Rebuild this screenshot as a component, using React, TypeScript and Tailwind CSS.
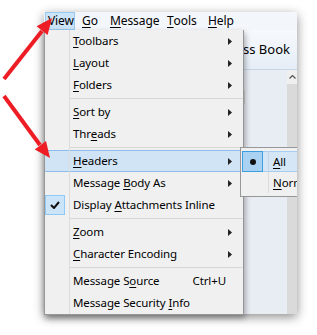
import { ReactNode } from 'react'

type Item = {
  label: ReactNode
  sub?: boolean
  shortcut?: string
  checked?: boolean
  active?: boolean
}

const u = (s: string) => <span className="underline underline-offset-[2px]">{s}</span>

const groups: Item[][] = [
  [
    { label: <>{u('T')}oolbars</>, sub: true },
    { label: <>{u('L')}ayout</>, sub: true },
    { label: <>{u('F')}olders</>, sub: true },
  ],
  [
    { label: <>{u('S')}ort by</>, sub: true },
    { label: <>Thr{u('e')}ads</>, sub: true },
  ],
  [
    { label: <>{u('H')}eaders</>, sub: true, active: true },
    { label: <>Message {u('B')}ody As</>, sub: true },
    { label: <>Display {u('A')}ttachments Inline</>, checked: true },
  ],
  [
    { label: <>{u('Z')}oom</>, sub: true },
    { label: <>{u('C')}haracter Encoding</>, sub: true },
  ],
  [
    { label: <>Message S{u('o')}urce</>, shortcut: 'Ctrl+U' },
    { label: <>Message Security {u('I')}nfo</> },
  ],
]

const menubar = [
  { label: <>View</>, w: 'w-[35px]', active: true },
  { label: <>{u('G')}o</>, w: 'w-[28px]' },
  { label: <>{u('M')}essage</>, w: 'w-[57px]' },
  { label: <>{u('T')}ools</>, w: 'w-[41px]' },
  { label: <>{u('H')}elp</>, w: 'w-[40px]' },
]

function Arrow() {
  return (
    <svg width="4" height="7" viewBox="0 0 4 7">
      <path d="M0 0 L4 3.5 L0 7 Z" fill="#222" />
    </svg>
  )
}

function MenuRow({ item }: { item: Item }) {
  return (
    <div
      className={`flex h-[22px] items-center border-y ${
        item.active ? 'border-[#8ebceb] bg-[#d1e4f6]' : 'border-transparent'
      }`}
    >
      <div className="flex h-[22px] w-[25px] items-center border-r border-[#dcdcdc]">
        {item.checked && (
          <div className="flex h-[20px] w-[20px] items-center justify-center border border-[#90c8f6] bg-[#cce4f7]">
            <svg width="10" height="8" viewBox="0 0 10 8">
              <path d="M1 4 L4 7 L9 1" stroke="#111" strokeWidth="2" fill="none" />
            </svg>
          </div>
        )}
      </div>
      <div className="flex-1 pl-[3px] leading-none">{item.label}</div>
      {item.shortcut && <div className="pr-[17px] leading-none">{item.shortcut}</div>}
      {item.sub && (
        <div className="flex pr-[11px]">
          <Arrow />
        </div>
      )}
    </div>
  )
}

export default function App() {
  return (
    <div
      className="relative h-[335px] w-[317px] overflow-hidden bg-white pl-[44px] pt-[12px] text-[12px] text-black"
      style={{ fontFamily: '"Noto Sans", "Open Sans", sans-serif' }}
    >
      {/* window */}
      <div className="flex h-[302px] w-[253px] flex-col shadow-[0_3px_10px_rgba(0,0,0,0.45)]">
        <div className="flex h-[18px] items-center bg-[#f3f6fb] pl-[1px] tracking-[-0.1px]">
          {menubar.map((m, i) => (
            <div key={i} className={`${m.w} flex h-[18px] items-center`}>
              <span
                className={`flex h-[18px] items-center pl-[2px] ${
                  m.active ? 'w-[30px] border border-[#99c9ef] bg-[#cce4f7] pl-[1px]' : ''
                }`}
              >
                {m.label}
              </span>
            </div>
          ))}
        </div>
        <div className="flex h-[40px] items-center justify-end border-b border-[#c9d6e6] bg-gradient-to-b from-[#f7fafd] to-[#e5edf7] pr-[7px] text-[13px]">
          Address Book
        </div>
        <div className="flex flex-1">
          <div className="flex-1 bg-[#e8ecf3] pt-[19px]">
            <div className="ml-[160px] h-[16px] w-[41px] rounded-[2px] border border-[#d4d4d4] bg-[#e6e6e6]" />
          </div>
          <div className="flex w-[10px] flex-col bg-[#dadada]">
            <div className="flex h-[14px] items-center justify-center bg-[#efefef]">
              <svg width="7" height="4" viewBox="0 0 7 4">
                <path d="M0.5 3.5 L3.5 0.5 L6.5 3.5" stroke="#555" strokeWidth="1.2" fill="none" />
              </svg>
            </div>
          </div>
        </div>
      </div>

      {/* dropdown menu */}
      <div className="absolute left-[44px] top-[30px] w-[200px] border border-t-0 border-[#979797] bg-[#f0f0f0] text-[11.5px] tracking-[-0.1px] shadow-[1px_3px_6px_rgba(0,0,0,0.35)]">
        {groups.map((g, gi) => (
          <div key={gi}>
            {gi > 0 && (
              <div className="flex h-[5px]">
                <div className="w-[25px] border-r border-[#dcdcdc]" />
                <div className="flex flex-1 items-center">
                  <div className="h-[1px] w-full bg-[#d7d7d7]" />
                </div>
              </div>
            )}
            {g.map((item, ii) => (
              <MenuRow key={ii} item={item} />
            ))}
          </div>
        ))}
      </div>

      {/* submenu */}
      <div className="absolute left-[240px] top-[147px] h-[50px] w-[57px] overflow-hidden border border-r-0 border-[#979797] bg-[#f0f0f0] pl-[1px] pt-[3px] text-[11.5px] tracking-[-0.1px]">
        <div className="flex h-[21px] w-[80px] items-center border-y border-[#a7cdf0] bg-[#d5e6f7]">
          <div className="flex h-[21px] w-[27px] items-center border-r border-[#c8d4e0]">
            <div className="flex h-[21px] w-[21px] items-center justify-center border border-[#3c9ee0] bg-[#a9d2f2]">
              <div className="h-[6px] w-[6px] rounded-full bg-[#111]" />
            </div>
          </div>
          <div className="pl-[4px] leading-none">{u('A')}ll</div>
        </div>
        <div className="flex h-[21px] w-[80px] items-center">
          <div className="h-[21px] w-[27px] border-r border-[#dcdcdc]" />
          <div className="pl-[4px] leading-none">{u('N')}ormal</div>
        </div>
      </div>

      {/* red arrows */}
      <svg className="pointer-events-none absolute left-0 top-0" width="317" height="335">
        <line x1="4" y1="79" x2="42" y2="31" stroke="#ee1c24" strokeWidth="4" />
        <polygon points="52,18 47.6,34.9 36.6,26.3" fill="#ee1c24" />
        <line x1="4" y1="96" x2="40" y2="145" stroke="#ee1c24" strokeWidth="4" />
        <polygon points="50,158 46,141 34.8,149.4" fill="#ee1c24" />
      </svg>
    </div>
  )
}
